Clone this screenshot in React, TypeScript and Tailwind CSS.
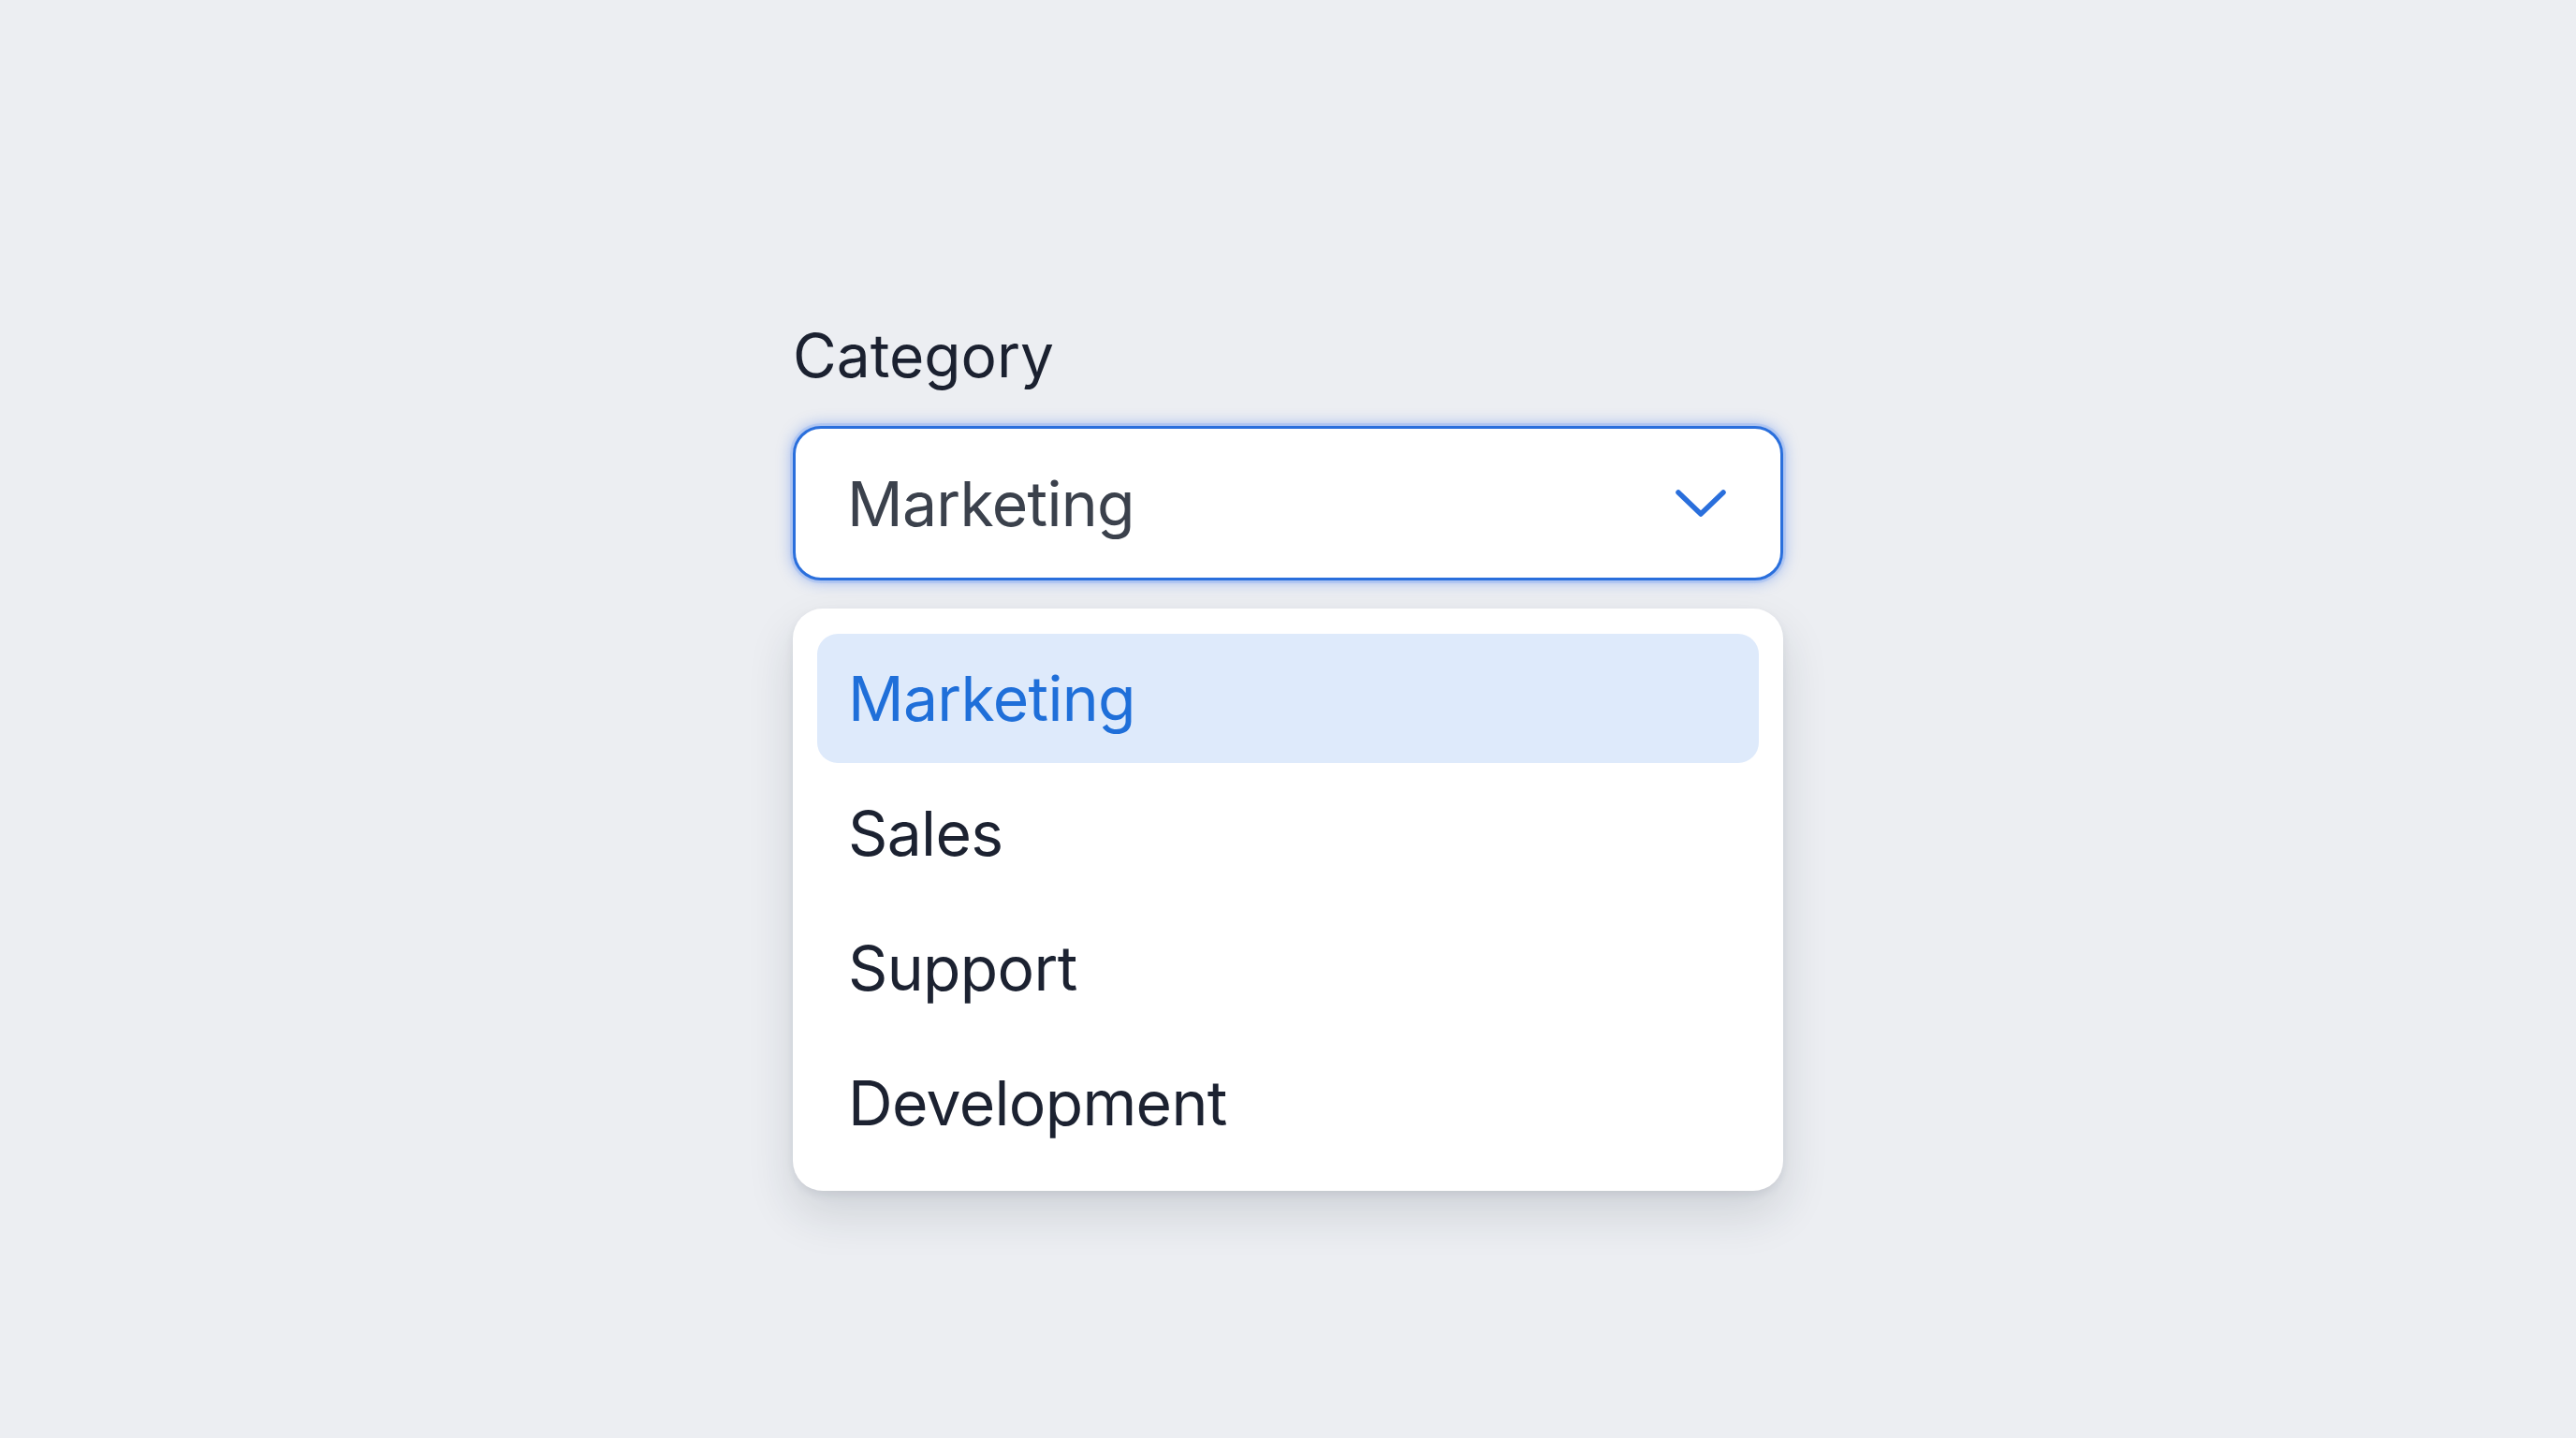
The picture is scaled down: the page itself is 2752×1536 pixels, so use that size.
import React from "react";

const items = ["Marketing", "Sales", "Support", "Development"];

export default function App() {
  return (
    <div
      className="min-h-screen w-full bg-[#eceef2] flex justify-center pt-[348px]"
      style={{ fontFamily: "Inter, 'Noto Sans', sans-serif" }}
    >
      <div className="w-[1058px] flex flex-col">
        <div className="text-[64px] leading-[64px] h-[63px] text-[#1b2130] tracking-[0em]">
          Category
        </div>
        <div className="mt-[44px] h-[165px] rounded-[30px] border-[3px] border-[#2a6fdc] bg-white flex items-center justify-between pl-[55px] pr-[58px] shadow-[0_0_0_3px_rgba(59,130,246,0.14),0_0_16px_rgba(37,99,235,0.5)]">
          <span className="text-[66px] leading-[66px] text-[#3b414c] tracking-[-0.01em]">
            Marketing
          </span>
          <svg width="54" height="30" viewBox="0 0 54 30" fill="none">
            <path
              d="M3 3 L27 26 L51 3"
              stroke="#2a6fdc"
              strokeWidth="5.5"
              strokeLinecap="round"
              strokeLinejoin="round"
            />
          </svg>
        </div>
        <div className="mt-[30px] rounded-[32px] bg-white pt-[27px] pb-[25px] px-[26px] flex flex-col gap-[6px] shadow-[0_24px_50px_rgba(30,40,60,0.14),0_4px_10px_rgba(30,40,60,0.08)]">
          {items.map((it, i) => (
            <div
              key={it}
              className={
                i === 0
                  ? "h-[138px] rounded-[22px] bg-[#deeafb] flex items-center pl-[33px]"
                  : "h-[138px] rounded-[22px] flex items-center pl-[33px]"
              }
            >
              <span
                className={
                  i === 0
                    ? "text-[66px] leading-[66px] text-[#1f6fd9] tracking-[-0.01em]"
                    : "text-[66px] leading-[66px] text-[#1c2231] tracking-[-0.01em]"
                }
              >
                {it}
              </span>
            </div>
          ))}
        </div>
      </div>
    </div>
  );
}
